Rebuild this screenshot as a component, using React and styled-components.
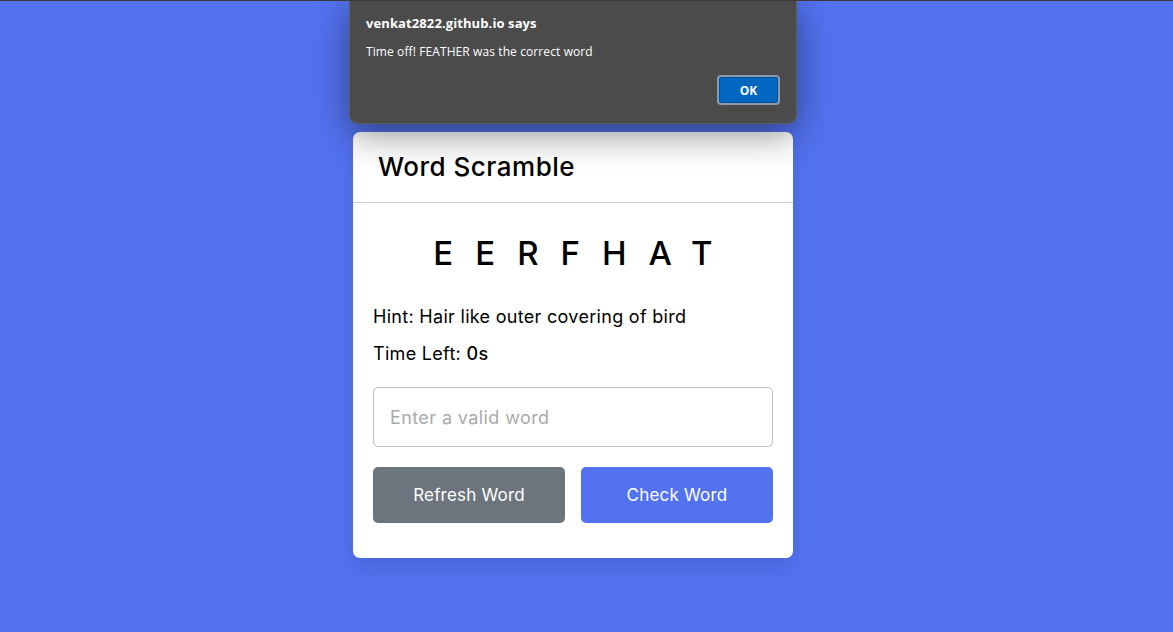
import React from "react";
import styled, { createGlobalStyle } from "styled-components";

const GlobalStyle = createGlobalStyle`
  * { box-sizing: border-box; margin: 0; padding: 0; }
  html, body { height: 100%; }
  body {
    background: #5372f0;
    border-top: 1px solid #3a3a3a;
    font-family: "Inter", "Open Sans", sans-serif;
    overflow: hidden;
  }
`;

const Page = styled.div`
  position: relative;
  display: flex;
  justify-content: center;
  padding: 131px 27px 0 0;
  height: 631px;
`;

const Card = styled.div`
  width: 440px;
  background: #fff;
  border-radius: 7px;
  box-shadow: 0 10px 20px rgba(0, 0, 0, 0.1);
  height: fit-content;
`;

const Header = styled.h2`
  font-size: 26px;
  font-weight: 500;
  letter-spacing: 0.5px;
  color: #000;
  padding: 16px 25px;
  line-height: 38px;
  border-bottom: 1px solid #ccc;
`;

const Content = styled.div`
  padding: 25px 20px 35px;
`;

const Word = styled.p`
  font-size: 33px;
  font-weight: 500;
  text-align: center;
  letter-spacing: 22px;
  margin-right: -22px;
  text-transform: uppercase;
  line-height: 50px;
  color: #000;
`;

const Details = styled.div`
  margin: 25px 0 20px;
`;

const Line = styled.p`
  font-size: 18px;
  letter-spacing: 0.3px;
  line-height: 27px;
  margin-bottom: 10px;
  color: #000;
  b { font-weight: 500; }
`;

const Input = styled.input`
  width: 100%;
  height: 60px;
  outline: none;
  padding: 0 16px;
  font-size: 18px;
  letter-spacing: 0.4px;
  border-radius: 5px;
  border: 1px solid #bfbfbf;
  font-family: inherit;
  &::placeholder { color: #aaa; }
`;

const Buttons = styled.div`
  display: flex;
  margin-top: 20px;
  justify-content: space-between;
`;

const Button = styled.button`
  border: none;
  outline: none;
  color: #fff;
  cursor: pointer;
  padding: 16px 0;
  font-size: 17px;
  letter-spacing: 0.2px;
  line-height: 24px;
  border-radius: 5px;
  font-family: inherit;
  width: calc(100% / 2 - 8px);
  background: ${(p) => (p.$variant === "refresh" ? "#6c757d" : "#5372f0")};
`;

const Dialog = styled.div`
  position: absolute;
  top: -1px;
  left: 349px;
  width: 448px;
  height: 124px;
  background: #4b4b4b;
  border: 1px solid #5e5e5e;
  border-top: none;
  border-radius: 0 0 9px 9px;
  box-shadow: 0 10px 36px rgba(0, 0, 0, 0.45);
  padding: 14px 16px 0 16px;
  font-family: "Open Sans", "Noto Sans", sans-serif;
  color: #fff;
  display: flex;
  flex-direction: column;
`;

const DialogTitle = styled.div`
  font-size: 13px;
  font-weight: 700;
  line-height: 18px;
  letter-spacing: 0.1px;
`;

const DialogMsg = styled.div`
  font-size: 12px;
  line-height: 17px;
  margin-top: 11px;
  letter-spacing: 0.1px;
`;

const DialogActions = styled.div`
  display: flex;
  justify-content: flex-end;
  margin-top: 15px;
`;

const OkButton = styled.button`
  width: 63px;
  height: 30px;
  background: #0067c0;
  color: #fff;
  font-family: inherit;
  font-size: 12px;
  font-weight: 700;
  border: 2px solid #8c9aaa;
  border-radius: 4px;
  box-shadow: inset 0 0 0 1px #00509a;
`;

export default function App() {
  return (
    <>
      <GlobalStyle />
      <Page>
        <Card>
          <Header>Word Scramble</Header>
          <Content>
            <Word>EERFHAT</Word>
            <Details>
              <Line>Hint: <span>Hair like outer covering of bird</span></Line>
              <Line>Time Left: <b>0s</b></Line>
            </Details>
            <Input type="text" placeholder="Enter a valid word" spellCheck="false" />
            <Buttons>
              <Button $variant="refresh">Refresh Word</Button>
              <Button $variant="check">Check Word</Button>
            </Buttons>
          </Content>
        </Card>
        <Dialog>
          <DialogTitle>venkat2822.github.io says</DialogTitle>
          <DialogMsg>Time off! FEATHER was the correct word</DialogMsg>
          <DialogActions>
            <OkButton>OK</OkButton>
          </DialogActions>
        </Dialog>
      </Page>
    </>
  );
}
